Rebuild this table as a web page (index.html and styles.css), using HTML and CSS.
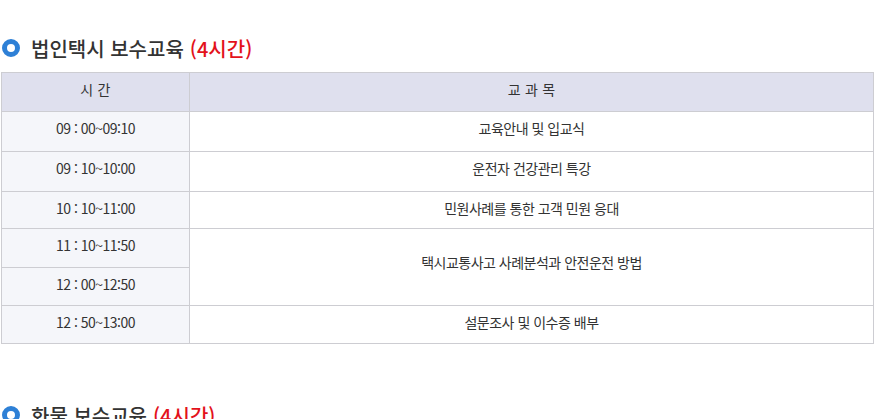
FILE: index.html
```html
<!DOCTYPE html>
<html lang="ko">
<head>
<meta charset="utf-8">
<link rel="stylesheet" href="styles.css">
</head>
<body>
<section class="course">
  <h2 class="title"><span class="dot"></span>법인택시 보수교육 <span class="hours">(4시간)</span></h2>
  <table class="schedule">
    <thead>
      <tr><th class="time">시 간</th><th>교 과 목</th></tr>
    </thead>
    <tbody>
      <tr class="r40"><td class="time">09 : 00~09:10</td><td>교육안내 및 입교식</td></tr>
      <tr class="r40"><td class="time">09 : 10~10:00</td><td>운전자 건강관리 특강</td></tr>
      <tr class="r37"><td class="time">10 : 10~11:00</td><td>민원사례를 통한 고객 민원 응대</td></tr>
      <tr class="r39"><td class="time">11 : 10~11:50</td><td class="merged" rowspan="2">택시교통사고 사례분석과 안전운전 방법</td></tr>
      <tr class="r38"><td class="time">12 : 00~12:50</td></tr>
      <tr class="r38"><td class="time">12 : 50~13:00</td><td>설문조사 및 이수증 배부</td></tr>
    </tbody>
  </table>
</section>
<section class="course second">
  <h2 class="title"><span class="dot"></span>화물 보수교육 <span class="hours">(4시간)</span></h2>
</section>
</body>
</html>
```
FILE: styles.css
```css
html, body {
  margin: 0;
  padding: 0;
  background: #fff;
}
body {
  font-family: "Noto Sans CJK KR", "Noto Sans", sans-serif;
  color: #333;
}
.course {
  padding: 0 2px 0 1px;
}
.title {
  margin: 0 0 6px;
  padding-top: 30px;
  height: 36px;
  box-sizing: content-box;
  display: flex;
  align-items: center;
  font-size: 20px;
  font-weight: 500;
  color: #333;
}
.dot {
  width: 18px;
  height: 18px;
  box-sizing: border-box;
  border: 5px solid #2e80d6;
  border-radius: 50%;
  margin: 0 11px 0 1px;
  flex: none;
}
.hours {
  color: #e3121b;
  margin-left: 6px;
}
.schedule {
  width: 873px;
  border-collapse: collapse;
  font-size: 14px;
  letter-spacing: -0.5px;
  color: #333;
}
.schedule th,
.schedule td {
  border: 1px solid #cdcdd2;
  text-align: center;
  line-height: 20px;
  padding: 6px 0 11px;
}
.schedule th {
  background: #dfe0ee;
  font-weight: 400;
  font-size: 14px;
  letter-spacing: 0.2px;
  word-spacing: 0;
  padding-bottom: 12px;
}
.schedule .time {
  width: 187px;
}
.schedule td.time {
  background: #f5f6fa;
}
.r40 td { padding-bottom: 13px; }
.r37 td { padding-bottom: 10px; }
.r39 td.time { padding-bottom: 12px; }
.r38 td { padding-bottom: 11px; }
.schedule td.merged { padding-bottom: 16px; }
.second {
  padding-top: 23px;
}
```
